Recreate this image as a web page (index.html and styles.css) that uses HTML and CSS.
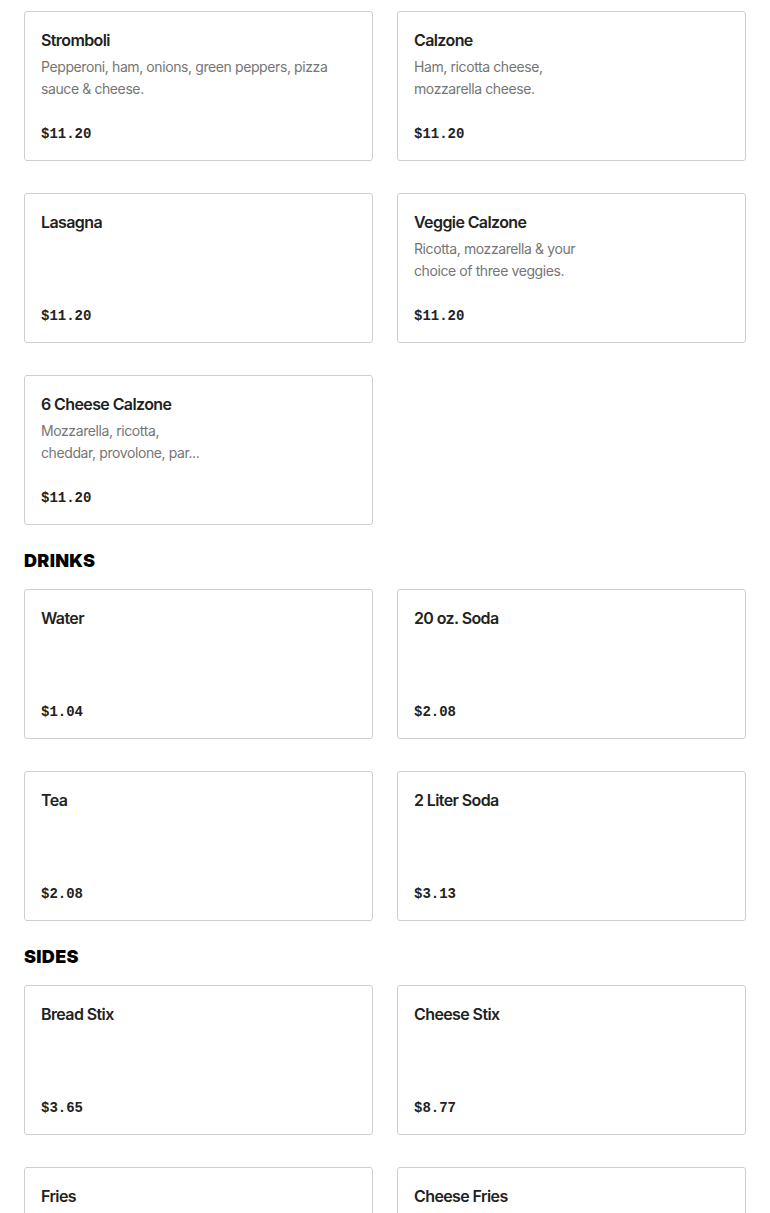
FILE: index.html
```html
<!DOCTYPE html>
<html>
<head>
<meta charset="utf-8">
<link rel="stylesheet" href="styles.css">
</head>
<body>
<div class="menu">
  <div class="grid">
    <div class="card"><div class="title">Stromboli</div><div class="desc">Pepperoni, ham, onions, green peppers, pizza<br>sauce &amp; cheese.</div><div class="price">$11.20</div></div>
    <div class="card"><div class="title">Calzone</div><div class="desc">Ham, ricotta cheese,<br>mozzarella cheese.</div><div class="price">$11.20</div></div>
    <div class="card"><div class="title">Lasagna</div><div class="price">$11.20</div></div>
    <div class="card"><div class="title">Veggie Calzone</div><div class="desc">Ricotta, mozzarella &amp; your<br>choice of three veggies.</div><div class="price">$11.20</div></div>
    <div class="card"><div class="title">6 Cheese Calzone</div><div class="desc">Mozzarella, ricotta,<br>cheddar, provolone, par...</div><div class="price">$11.20</div></div>
  </div>
  <h2 class="section">DRINKS</h2>
  <div class="grid">
    <div class="card"><div class="title">Water</div><div class="price">$1.04</div></div>
    <div class="card"><div class="title">20 oz. Soda</div><div class="price">$2.08</div></div>
    <div class="card"><div class="title">Tea</div><div class="price">$2.08</div></div>
    <div class="card"><div class="title">2 Liter Soda</div><div class="price">$3.13</div></div>
  </div>
  <h2 class="section">SIDES</h2>
  <div class="grid">
    <div class="card"><div class="title">Bread Stix</div><div class="price">$3.65</div></div>
    <div class="card"><div class="title">Cheese Stix</div><div class="price">$8.77</div></div>
    <div class="card"><div class="title">Fries</div><div class="price">$2.08</div></div>
    <div class="card"><div class="title">Cheese Fries</div><div class="price">$3.13</div></div>
  </div>
</div>
</body>
</html>
```

FILE: styles.css
```css
html, body { margin: 0; padding: 0; background: #fff; }
body { font-family: "Inter", "Liberation Sans", sans-serif; color: #222; }
.menu { padding: 11px 24px 24px 24px; }
.grid { display: grid; grid-template-columns: 1fr 1fr; column-gap: 24px; row-gap: 32px; }
.card {
  box-sizing: border-box;
  height: 150px;
  border: 1px solid #cfcfcf;
  border-radius: 3px;
  padding: 16px;
  display: flex;
  flex-direction: column;
}
.title { font-size: 16px; line-height: 24px; font-weight: 600; letter-spacing: -0.6px; color: #222; }
.desc { margin-top: 4px; font-size: 14px; line-height: 22px; letter-spacing: -0.4px; color: #767676; }
.price { margin-top: auto; font-family: "Liberation Mono", monospace; font-weight: 700; font-size: 14px; line-height: 20px; color: #222; }
.section { margin: 24px 0 16px 0; font-size: 18px; line-height: 24px; font-weight: 900; color: #000; letter-spacing: 0.3px; }
```
